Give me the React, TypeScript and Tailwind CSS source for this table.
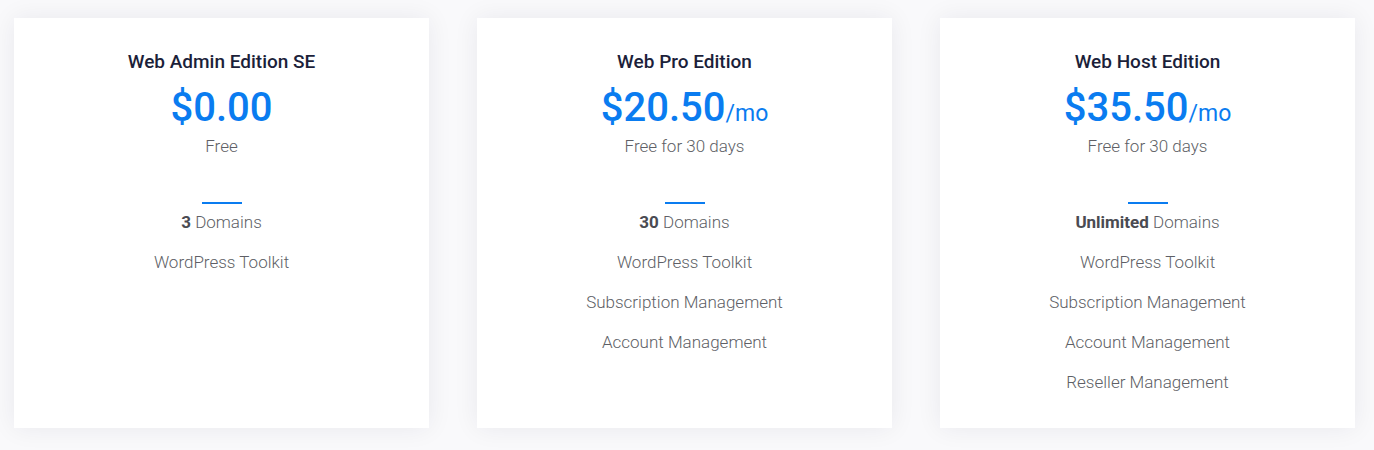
import React from "react";

type Plan = {
  title: string;
  price: string;
  per?: string;
  sub: string;
  bold: string;
  features: string[];
};

const plans: Plan[] = [
  { title: "Web Admin Edition SE", price: "$0.00", sub: "Free", bold: "3", features: ["WordPress Toolkit"] },
  {
    title: "Web Pro Edition",
    price: "$20.50",
    per: "/mo",
    sub: "Free for 30 days",
    bold: "30",
    features: ["WordPress Toolkit", "Subscription Management", "Account Management"],
  },
  {
    title: "Web Host Edition",
    price: "$35.50",
    per: "/mo",
    sub: "Free for 30 days",
    bold: "Unlimited",
    features: ["WordPress Toolkit", "Subscription Management", "Account Management", "Reseller Management"],
  },
];

export default function App() {
  return (
    <div
      className="w-[1374px] h-[450px] bg-[#f9f9fb] pl-[14px] pt-[18px] flex gap-[48px]"
      style={{ fontFamily: "Roboto, 'Noto Sans', sans-serif" }}
    >
      {plans.map((p) => (
        <div
          key={p.title}
          className="w-[415px] h-[410px] bg-white shadow-[0_0_24px_rgba(30,30,60,0.07)] flex flex-col items-center pt-[32px]"
        >
          <div className="text-[19px] leading-6 font-medium text-[#1c1f3a]">{p.title}</div>
          <div className="mt-[10px] flex items-baseline text-[#0a7cf0]">
            <span className="text-[40px] leading-[48px] font-medium">{p.price}</span>
            {p.per && <span className="text-[23px] leading-[28px] font-normal">{p.per}</span>}
          </div>
          <div className="mt-[2px] text-[17px] leading-6 font-light text-[#5e5f66]">{p.sub}</div>
          <div className="mt-[44px] w-[40px] h-[2px] bg-[#0a7cf0]" />
          <div className="mt-[6px] flex flex-col items-center gap-4 text-[17px] leading-6 font-light text-[#5e5f66]">
            <div>
              <span className="font-bold text-[#4a4b52]">{p.bold}</span> Domains
            </div>
            {p.features.map((f) => (
              <div key={f}>{f}</div>
            ))}
          </div>
        </div>
      ))}
    </div>
  );
}
